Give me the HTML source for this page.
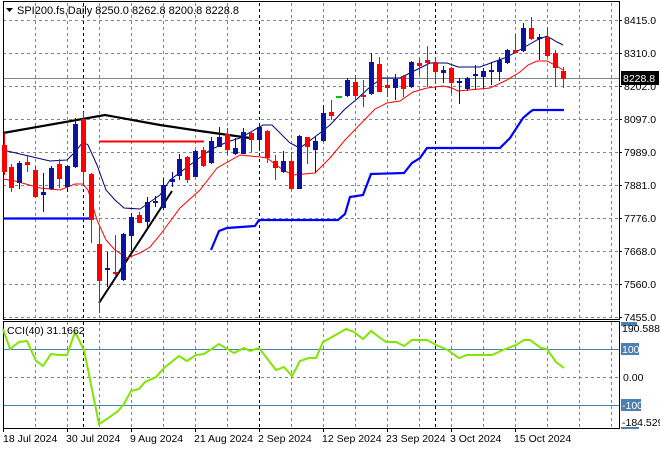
<!DOCTYPE html>
<html><head><meta charset="utf-8"><style>
html,body{margin:0;padding:0;background:#fff;width:660px;height:450px;overflow:hidden}
svg{display:block}
text{font-family:"Liberation Sans",sans-serif;font-size:10.5px;fill:#000}
</style></head><body>
<svg width="660" height="450" viewBox="0 0 660 450" xmlns="http://www.w3.org/2000/svg">
<rect width="660" height="450" fill="#fff"/>
<!-- grid main -->
<g stroke="#778899" stroke-width="1" stroke-dasharray="3,3" fill="none">
<path d="M3 20.5H619M3 53.5H619M3 86.5H619M3 119.5H619M3 152.5H619M3 185.5H619M3 218.5H619M3 251.5H619M3 284.5H619M3 317.5H619"/>
<path d="M35.5 3V320M67.5 3V320M99.5 3V320M131.5 3V320M163.5 3V320M195.5 3V320M227.5 3V320M291.5 3V320M323.5 3V320M355.5 3V320M387.5 3V320M419.5 3V320M451.5 3V320M483.5 3V320M515.5 3V320M547.5 3V320M579.5 3V320M611.5 3V320"/>
<path d="M35.5 322V428M67.5 322V428M99.5 322V428M131.5 322V428M163.5 322V428M195.5 322V428M227.5 322V428M291.5 322V428M323.5 322V428M355.5 322V428M387.5 322V428M419.5 322V428M451.5 322V428M483.5 322V428M515.5 322V428M547.5 322V428M579.5 322V428M611.5 322V428"/>
<path d="M3 377.5H619"/>
</g>
<g stroke="#000" stroke-width="1" stroke-dasharray="3,3" fill="none">
<path d="M83.5 3V320M259.5 3V320M435.5 3V320M83.5 322V428M259.5 322V428M435.5 322V428"/>
</g>
<!-- current price line -->
<path d="M3 78.5H619" stroke="#778899" stroke-width="1"/>
<!-- CCI levels -->
<path d="M3 349.5H619M3 405.5H619" stroke="#4682B4" stroke-width="1"/>
<!-- frames -->
<g fill="none" stroke="#000" stroke-width="1">
<rect x="3.5" y="1.5" width="616" height="318"/>
<rect x="3.5" y="321.5" width="616" height="107"/>
</g>
<!-- blue step band -->
<polyline fill="none" stroke="#0000ff" stroke-width="2.2" points="3,218.5 91,218.5"/>
<polyline fill="none" stroke="#0000ff" stroke-width="2.2" points="211,250 219,231 227,228 255,226 259,220 338,220 345,214 350,197 363,195 371,174 404,173 412,163 420,158 427,148 500,148 510,138 523,118 530,112 533,110 564,110"/>
<!-- black lines -->
<polyline fill="none" stroke="#000" stroke-width="2.2" points="3,133 105,115 160,125 200,131 250,138"/>
<polyline fill="none" stroke="#000" stroke-width="2" points="99,303 172,191"/>
<path d="M99 141.5H204" stroke="#ff0000" stroke-width="2"/>
<!-- navy MA -->
<polyline fill="none" stroke="#000080" stroke-width="1" points="3,150 20,154 50,161 67,160 75,152 83,142 88,145 97,165 106,190 115,200 124,208 140,209 150,202 160,195 170,180 190,165 210,150 227,142 240,138 263,125 272,125 290,143 300,148 320,133 330,125 345,109 357,99 370,87 382,78 400,78 410,73 420,68 430,63 447,63 458,67 480,67 507,57 523,48 537,40 547,36 557,42 563,45"/>
<!-- red MA -->
<polyline fill="none" stroke="#ff0000" stroke-width="1" points="3,179 15,181 40,188 60,190 75,184 83,184 88,190 97,220 106,240 115,250 127,258 140,253 150,247 160,235 180,208 200,190 217,168 240,155 260,157 267,158 283,170 293,175 315,173 330,158 345,140 375,109 387,103 400,101 413,92 427,88 443,86 452,88 458,91 490,88 507,80 520,72 528,65 537,61 547,61 555,65 563,70"/>
<!-- candles -->
<g id="c"></g>
<g stroke-width="1">
<path stroke="#ff0000" d="M4.5 133V175M11.5 164V192M27.5 156V172M35.5 166V198M59.5 159V188M83.5 112V184M91.5 173V243M99.5 228V313M115.5 235V277M139.5 212V223M187.5 156V183M203.5 147V167M227.5 128V155M251.5 131V152M267.5 130V163M275.5 155V180M291.5 152V190M307.5 137V164M331.5 100V120M355.5 75V101M363.5 80V107M379.5 57V92M387.5 78V97M403.5 75V97M419.5 58V75M427.5 46V87M435.5 57V84M451.5 67V93M515.5 34V53M531.5 17V40M547.5 27V57M555.5 50V87M563.5 67V88"/>
<path stroke="#0000c8" d="M19.5 161V189M43.5 173V212M51.5 166V190M67.5 165V192M75.5 118V168M107.5 252V287M123.5 233V281M131.5 213V250M147.5 197V228M155.5 196V207M163.5 178V210M172.5 172V187M179.5 154V180M195.5 150V177M211.5 137V164M219.5 127V147M235.5 138V155M243.5 128V154M259.5 123V151M283.5 151V173M299.5 135V189M315.5 137V173M323.5 105V142M347.5 78V97M371.5 53V95M395.5 74V100M411.5 61V88M443.5 66V83M459.5 78V104M467.5 77V91M475.5 65V90M483.5 68V88M491.5 62V85M499.5 57V81M507.5 49V64M523.5 23V52M539.5 34V60"/>
</g>
<g fill="#ff0000">
<rect x="2" y="145" width="5" height="27"/><rect x="9" y="167" width="5" height="21"/><rect x="25" y="162" width="5" height="3"/><rect x="33" y="170" width="5" height="27"/><rect x="57" y="164" width="5" height="15"/><rect x="81" y="119" width="5" height="53"/><rect x="89" y="174" width="5" height="46"/><rect x="97" y="244" width="5" height="37"/><rect x="113" y="272" width="5" height="2"/><rect x="137" y="215" width="5" height="8"/><rect x="185" y="157" width="5" height="23"/><rect x="201" y="150" width="5" height="16"/><rect x="225" y="134" width="5" height="16"/><rect x="249" y="133" width="5" height="7"/><rect x="265" y="131" width="5" height="27"/><rect x="273" y="161" width="5" height="7"/><rect x="289" y="161" width="5" height="28"/><rect x="305" y="137" width="5" height="10"/><rect x="329" y="112" width="5" height="4"/><rect x="353" y="82" width="5" height="14"/><rect x="361" y="95" width="5" height="2"/><rect x="377" y="64" width="5" height="28"/><rect x="385" y="85" width="5" height="3"/><rect x="401" y="76" width="5" height="13"/><rect x="417" y="63" width="5" height="3"/><rect x="425" y="60" width="5" height="3"/><rect x="433" y="62" width="5" height="10"/><rect x="449" y="68" width="5" height="15"/><rect x="513" y="50" width="5" height="3"/><rect x="529" y="28" width="5" height="11"/><rect x="545" y="37" width="5" height="19"/><rect x="553" y="53" width="5" height="15"/><rect x="561" y="71" width="5" height="8"/>
</g>
<g fill="#0a14a0">
<rect x="17" y="163" width="5" height="20"/><rect x="41" y="192" width="5" height="3"/><rect x="49" y="168" width="5" height="21"/><rect x="65" y="166" width="5" height="21"/><rect x="73" y="124" width="5" height="43"/><rect x="105" y="268" width="5" height="2"/><rect x="121" y="234" width="5" height="46"/><rect x="129" y="217" width="5" height="19"/><rect x="145" y="202" width="5" height="20"/><rect x="153" y="201" width="5" height="2"/><rect x="161" y="185" width="5" height="23"/><rect x="170" y="179" width="5" height="3"/><rect x="177" y="159" width="5" height="17"/><rect x="193" y="151" width="5" height="26"/><rect x="209" y="141" width="5" height="22"/><rect x="217" y="137" width="5" height="10"/><rect x="233" y="148" width="5" height="6"/><rect x="241" y="132" width="5" height="22"/><rect x="257" y="127" width="5" height="13"/><rect x="281" y="161" width="5" height="11"/><rect x="297" y="136" width="5" height="53"/><rect x="313" y="141" width="5" height="9"/><rect x="321" y="113" width="5" height="28"/><rect x="345" y="80" width="5" height="16"/><rect x="369" y="62" width="5" height="32"/><rect x="393" y="79" width="5" height="9"/><rect x="409" y="62" width="5" height="25"/><rect x="441" y="70" width="5" height="3"/><rect x="457" y="81" width="5" height="2"/><rect x="465" y="78" width="5" height="11"/><rect x="473" y="74" width="5" height="2"/><rect x="481" y="71" width="5" height="6"/><rect x="489" y="70" width="5" height="2"/><rect x="497" y="60" width="5" height="12"/><rect x="505" y="50" width="5" height="13"/><rect x="521" y="28" width="5" height="23"/><rect x="537" y="37" width="5" height="2"/>
</g>
<rect x="336" y="96" width="6" height="2" fill="#00c000"/>
<!-- CCI -->
<polyline fill="none" stroke="#80e600" stroke-width="2" points="3,329 10,349 19,342 27,341 36,361 43,366 51,354 59,355 67,355 75,332 84,350 99,424 107,419 118,411 124,404 131,391 139,389 145,382 156,377 164,368 179,356 187,361 196,355 204,354 219,344 234,353 244,348 250,351 259,348 276,370 284,367 292,376 300,361 309,358 316,358 323,342 332,337 346,329 354,332 363,339 371,331 379,337 386,342 396,342 404,346 412,340 427,340 438,346 446,349 459,358 467,355 492,355 503,350 516,345 524,340 530,340 541,348 547,349 556,362 564,368"/>
<!-- axis labels -->
<g>
<text x="624" y="24">8415.0</text><text x="624" y="57">8310.0</text><text x="624" y="90">8202.0</text><text x="624" y="123">8097.0</text><text x="624" y="156">7989.0</text><text x="624" y="189">7881.0</text><text x="624" y="222">7776.0</text><text x="624" y="255">7668.0</text><text x="624" y="288">7560.0</text><text x="624" y="321">7455.0</text>
</g>
<path d="M619 20.5h3M619 53.5h3M619 86.5h3M619 119.5h3M619 152.5h3M619 185.5h3M619 218.5h3M619 251.5h3M619 284.5h3M619 317.5h3" stroke="#000"/>
<rect x="621" y="71" width="38" height="14" fill="#000"/>
<text x="623" y="82" style="fill:#fff">8228.8</text>
<rect x="621" y="322" width="16" height="4" fill="#4a7fb0"/>
<text x="622" y="332">190.5883</text>
<rect x="621" y="343" width="18" height="12" fill="#4a7fb0"/>
<text x="622" y="353" style="fill:#fff">100</text>
<text x="623" y="381">0.00</text>
<rect x="621" y="399" width="20" height="12" fill="#4a7fb0"/>
<text x="622" y="409" style="fill:#fff">-100</text>
<text x="622" y="426">-184.5296</text>
<rect x="621" y="427" width="18" height="2" fill="#4a7fb0"/>
<text x="7" y="334">CCI(40) 31.1662</text>
<!-- title -->
<path d="M6 8h7l-3.5 4z" fill="#000"/>
<text x="17" y="14" style="font-size:11px">SPI200.fs,Daily  8250.0 8262.8 8200.8 8228.8</text>
<!-- dates -->
<path d="M3.5 428v4M67.5 428v4M131.5 428v4M195.5 428v4M259.5 428v4M323.5 428v4M387.5 428v4M451.5 428v4M515.5 428v4" stroke="#000"/>
<g style="font-size:10px">
<text x="3" y="442">18 Jul 2024</text><text x="66" y="442">30 Jul 2024</text><text x="130" y="442">9 Aug 2024</text><text x="194" y="442">21 Aug 2024</text><text x="258" y="442">2 Sep 2024</text><text x="322" y="442">12 Sep 2024</text><text x="386" y="442">23 Sep 2024</text><text x="450" y="442">3 Oct 2024</text><text x="514" y="442">15 Oct 2024</text>
</g>
</svg>
</body></html>
